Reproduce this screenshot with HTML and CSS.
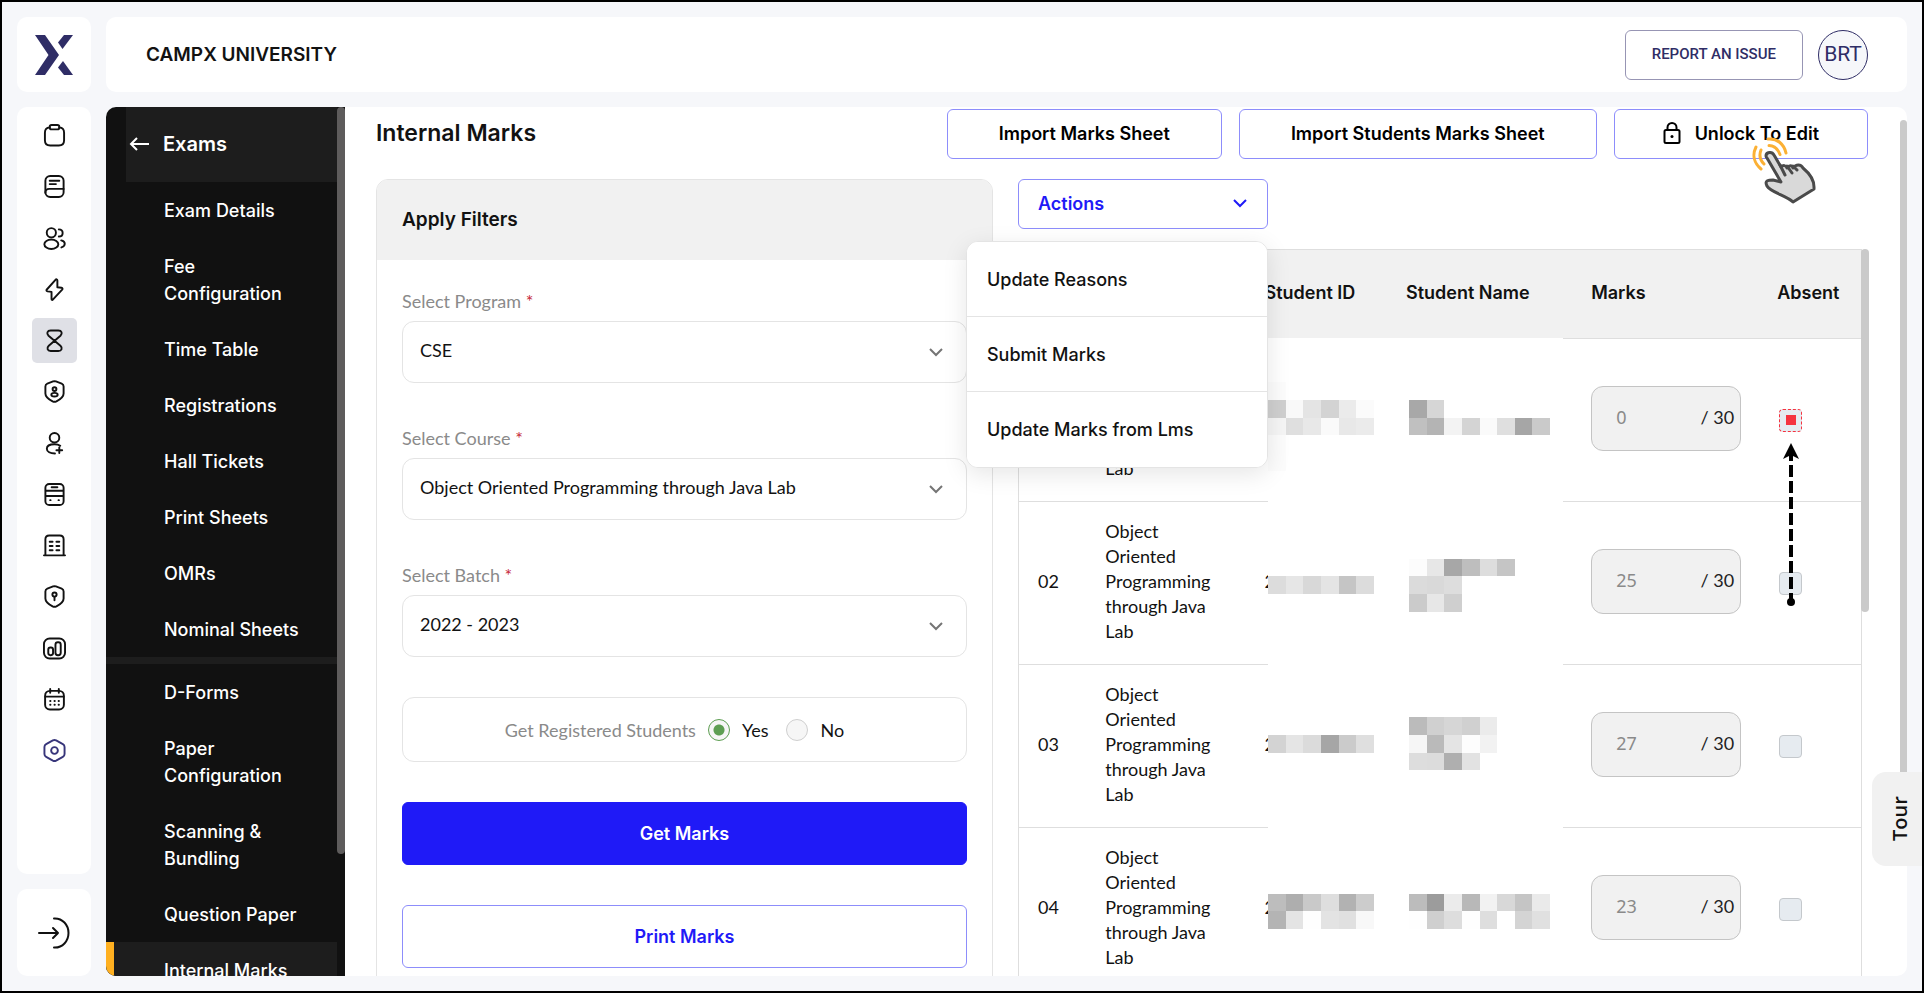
FILE: index.html
```html
<!DOCTYPE html>
<html lang="en">
<head>
    <meta charset="UTF-8">
    <meta name="viewport" content="width=device-width, initial-scale=1.0">
    <title>Internal Marks - CampX University</title>
    <link rel="stylesheet" href="styles.css">
</head>
<body>
    <div class="rail">
        <a href="#" class="rail-logo" aria-label="CampX">
            <svg width="38" height="40" viewBox="0 0 38 40" fill="#2f2d66">
                <path d="M0 0h10l14 20L10 40H0l13.500-20z"/>
                <path d="M29 0h9l-10.500 14-4.500-6.500z"/>
                <path d="M28 26l10 14h-9l-6-7.500z"/>
            </svg>
        </a>
        <nav class="rail-nav" aria-label="Modules">
            <a href="#" class="rail-link" aria-label="Tasks">
                <svg class="icon" viewBox="0 0 24 24"><path d="M7 3.500C4 3.800 2 5.500 2 9v8c0 4 1.500 5.500 5.500 5.500h9c4 0 5.500-1.500 5.500-5.500V9c0-3.500-2-5.200-5-5.500"/><rect x="7" y="1" width="10" height="4.600" rx="2"/></svg>
            </a>
            <a href="#" class="rail-link" aria-label="Courses">
                <svg class="icon" viewBox="0 0 24 24"><rect x="2.500" y="1" width="19" height="22" rx="5"/><path d="M2.500 18.500c0-2.500 1.500-4 4-4h15M7 6h10M7 9.500h6.500"/></svg>
            </a>
            <a href="#" class="rail-link" aria-label="People">
                <svg class="icon" viewBox="0 0 24 24"><circle cx="8.700" cy="6" r="4.800"/><ellipse cx="8.700" cy="18" rx="7.300" ry="4.900"/><path d="M16.500 2.500c2.500 0 4 1.600 4 3.700s-1.500 3.700-4 3.700M19 14c2 .4 3.700 1.700 3.700 3.600s-1.400 3.200-3.500 3.700"/></svg>
            </a>
            <a href="#" class="rail-link" aria-label="Activity">
                <svg class="icon" viewBox="0 0 24 24"><path d="M13 1.900 4 12c-.8.900-.4 1.800.7 2l4.200.5v7.300c0 1.200.8 1.500 1.600.6L20 12.200c.8-.9.400-1.800-.7-2l-4.300-.5V2.500c0-1.100-1.200-1.500-2-.6z"/></svg>
            </a>
            <a href="#" class="rail-link rail-link-active" aria-label="Exams">
                <svg class="icon" viewBox="0 0 24 24"><path d="M8 1.500h8c3.600 0 4.600 3.200 2.200 5.500L6 17.500c-2.400 2.300-1.400 5.500 2 5.500h8c3.600 0 4.600-3.200 2.200-5.500L5.800 7C3.400 4.700 4.400 1.500 8 1.500z"/></svg>
            </a>
            <a href="#" class="rail-link" aria-label="Admissions">
                <svg class="icon" viewBox="0 0 24 24"><path d="M10.500 1.500 4.500 3.700c-1.300.5-2 1.500-2 3V14c0 4 3.500 6.200 7.500 8.300 1.500.7 2.500.7 4 0 4-2.100 7.500-4.300 7.500-8.300V6.700c0-1.500-.7-2.500-2-3l-6-2.200c-1.200-.4-1.900-.4-3 0z"/><circle cx="12" cy="9.500" r="2"/><ellipse cx="12" cy="15.300" rx="3.300" ry="1.900"/></svg>
            </a>
            <a href="#" class="rail-link" aria-label="Add user">
                <svg class="icon" viewBox="0 0 24 24"><circle cx="12" cy="6" r="5"/><path d="M12.500 22.500C7.500 22.500 4 20.500 4 17.500S7.500 12.800 12 12.800c2.500 0 4.500.5 6 1.500M17 16v6M14 19h6"/></svg>
            </a>
            <a href="#" class="rail-link" aria-label="Transport">
                <svg class="icon" viewBox="0 0 24 24"><rect x="2.500" y="1" width="19" height="22" rx="4"/><path d="M9 4.500h6M3 8h18M3 13.500h18M7.500 17.900h.4M16.200 17.900h.4"/></svg>
            </a>
            <a href="#" class="rail-link" aria-label="Hostel">
                <svg class="icon" viewBox="0 0 24 24"><path d="M2.500 22V5.500c0-2.500 1.500-4 4-4h11c2.500 0 4 1.500 4 4V22M1 22.300h22M7 8h3M7 12.500h3M7 17h3M14 8h3M14 12.500h3M14 17h3"/></svg>
            </a>
            <a href="#" class="rail-link" aria-label="Security">
                <svg class="icon" viewBox="0 0 24 24"><path d="M10.500 1.500 4.500 3.700c-1.300.5-2 1.500-2 3V14c0 4 3.500 6.200 7.500 8.300 1.500.7 2.500.7 4 0 4-2.100 7.500-4.300 7.500-8.300V6.700c0-1.500-.7-2.500-2-3l-6-2.200c-1.200-.4-1.900-.4-3 0z"/><circle cx="12" cy="10" r="2.200"/><path d="M12 12.500V16"/></svg>
            </a>
            <a href="#" class="rail-link" aria-label="Reports">
                <svg class="icon" viewBox="0 0 24 24"><rect x="1" y="1.500" width="22" height="21" rx="6"/><rect x="5.500" y="11" width="5" height="8" rx="2.200"/><rect x="13" y="5.500" width="5.500" height="13.500" rx="2.500"/></svg>
            </a>
            <a href="#" class="rail-link" aria-label="Calendar">
                <svg class="icon" viewBox="0 0 24 24"><rect x="2.200" y="3" width="19.600" height="19.500" rx="5"/><path d="M2.500 9h19M7.500 1v4M16.500 1v4M7.500 13.500h.3M12 13.500h.3M16.300 13.500h.3M7.500 17.500h.3M12 17.500h.3M16.300 17.500h.3"/></svg>
            </a>
            <a href="#" class="rail-link rail-link-settings" aria-label="Settings">
                <svg class="icon" viewBox="0 0 24 24"><path d="M10.300 1.500 3.300 5.300C2 6 1.500 7 1.500 8.300v7.400c0 1.300.5 2.300 1.800 3l7 3.800c1.200.6 2.200.6 3.400 0l7-3.800c1.300-.7 1.800-1.700 1.800-3V8.300c0-1.300-.5-2.300-1.800-3l-7-3.800c-1.200-.6-2.200-.6-3.400 0z"/><circle cx="12" cy="12" r="3.500"/></svg>
            </a>
        </nav>
        <a href="#" class="rail-logout" aria-label="Log out">
            <svg width="32" height="32" viewBox="0 0 32 32" fill="none" stroke="#111" stroke-width="2" stroke-linecap="round" stroke-linejoin="round"><path d="M1 16h19M15 11l5 5-5 5M16 1.500c8.500-.5 14.500 6.500 14.500 14.500S24.500 31 16 30.500"/></svg>
        </a>
    </div>

    <div class="page">
        <header class="topbar">
            <div class="org-name">CAMPX UNIVERSITY</div>
            <button type="button" class="report-button">REPORT AN ISSUE</button>
            <div class="avatar">BRT</div>
        </header>

        <div class="main">
            <aside class="sidebar">
                <a href="#" class="sidebar-title">
                    <svg width="20" height="14" viewBox="0 0 20 14" fill="none" stroke="#fff" stroke-width="2"><path d="M20 7H2M8 1 2 7l6 6"/></svg>
                    Exams
                </a>
                <nav class="sidebar-nav">
                    <a href="#">Exam Details</a>
                    <a href="#">Fee Configuration</a>
                    <a href="#">Time Table</a>
                    <a href="#">Registrations</a>
                    <a href="#">Hall Tickets</a>
                    <a href="#">Print Sheets</a>
                    <a href="#">OMRs</a>
                    <a href="#">Nominal Sheets</a>
                    <hr>
                    <a href="#">D-Forms</a>
                    <a href="#">Paper Configuration</a>
                    <a href="#">Scanning &amp; Bundling</a>
                    <a href="#">Question Paper</a>
                    <a href="#" class="active">Internal Marks</a>
                </nav>
                <div class="thumb sidebar-thumb"></div>
            </aside>

            <main class="content">
                <div class="title-row">
                    <h1>Internal Marks</h1>
                    <button type="button" class="outline-button">Import Marks Sheet</button>
                    <button type="button" class="outline-button">Import Students Marks Sheet</button>
                    <button type="button" class="outline-button unlock-button">
                        <svg width="18" height="24" viewBox="0 0 18 24" fill="none" stroke="#000" stroke-width="2"><rect x="1.500" y="9" width="15" height="13" rx="1.500"/><path d="M4.500 9V6.500a4.500 4.500 0 0 1 9 0V9"/><circle cx="9" cy="15.500" r="1.500" fill="#000" stroke="none"/></svg>
                        Unlock To Edit
                        <!-- tapping hand -->
                        <svg class="tap-hand" width="66" height="68" viewBox="0 0 66 68" fill="none" stroke-linecap="round" stroke-linejoin="round">
                            <path d="M16 2c9-1 16 5 18 14M17 8.500c5 0 9 4 11 9M4 10C0 18 2 26 9 32M9 13c-2 5-1 10 3 14" stroke="#fbb034" stroke-width="3"/>
                            <path d="M14 19c0-4 6-5 8-1l7 12c2-2 5-2 6 1 2-3 5-3 6 0 3-4 8-4 10 0 6 5 11 12 11 19v2L41 65C35 59 18 55 15 49c-3-6 2-6 6-6l8 2-14-24c-1-1-1-1-1-2z" fill="#d9d9d9" stroke="#4a4a4a" stroke-width="3"/>
                            <path d="M28 28l5 10M35 29l5 7M41 29l4 4" stroke="#4a4a4a" stroke-width="3"/>
                        </svg>
                    </button>
                </div>

                <div class="columns">
                    <form class="filters">
                        <h2>Apply Filters</h2>
                        <div class="filters-body">
                            <div class="field">
                                <label for="program">Select Program <span>*</span></label>
                                <div class="select-box">
                                    <select id="program"><option>CSE</option></select>
                                    <svg class="chevron" viewBox="0 0 14 9"><path d="M1 1l6 6 6-6"/></svg>
                                </div>
                            </div>
                            <div class="field">
                                <label for="course">Select Course <span>*</span></label>
                                <div class="select-box">
                                    <select id="course"><option>Object Oriented Programming through Java Lab</option></select>
                                    <svg class="chevron" viewBox="0 0 14 9"><path d="M1 1l6 6 6-6"/></svg>
                                </div>
                            </div>
                            <div class="field">
                                <label for="batch">Select Batch <span>*</span></label>
                                <div class="select-box">
                                    <select id="batch"><option>2022 - 2023</option></select>
                                    <svg class="chevron" viewBox="0 0 14 9"><path d="M1 1l6 6 6-6"/></svg>
                                </div>
                            </div>
                            <div class="radio-box" role="radiogroup" aria-labelledby="registeredLabel">
                                <span id="registeredLabel">Get Registered Students</span>
                                <label><input type="radio" name="registered" checked>Yes</label>
                                <label><input type="radio" name="registered">No</label>
                            </div>
                            <button type="button" class="get-button">Get Marks</button>
                            <button type="button" class="print-button">Print Marks</button>
                        </div>
                    </form>

                    <section class="marks">
                        <div class="actions">
                            <button type="button" class="actions-button">
                                Actions
                                <svg class="chevron" viewBox="0 0 14 9"><path d="M1 1l6 6 6-6"/></svg>
                            </button>
                            <div class="actions-menu">
                                <button type="button">Update Reasons</button>
                                <button type="button">Submit Marks</button>
                                <button type="button">Update Marks from Lms</button>
                            </div>
                        </div>

                        <div class="table-wrap">
                            <table>
                                <colgroup>
                                    <col class="col-no"><col class="col-subject"><col class="col-id"><col class="col-name"><col class="col-marks"><col class="col-absent">
                                </colgroup>
                                <thead>
                                    <tr>
                                        <th></th>
                                        <th></th>
                                        <th>Student ID</th>
                                        <th>Student Name</th>
                                        <th>Marks</th>
                                        <th>Absent</th>
                                    </tr>
                                </thead>
                                <tbody>
                                    <tr>
                                        <td></td>
                                        <td>Object Oriented Programming through Java Lab</td>
                                        <td></td>
                                        <td></td>
                                        <td><div class="mark"><input type="text" value="0" aria-label="Marks 01" disabled><span>/ 30</span></div></td>
                                        <td class="absent-cell">
                                            <input type="checkbox" aria-label="Absent 01" checked>
                                            <svg class="guide-arrow" width="16" height="164" viewBox="0 0 16 164"><path d="M8 10v148" stroke="#000" stroke-width="4" stroke-dasharray="12 4" stroke-dashoffset="4"/><path d="M8 0l8 16-8-4-8 4z"/><circle cx="8" cy="159" r="4"/></svg>
                                        </td>
                                    </tr>
                                    <tr>
                                        <td>02</td>
                                        <td>Object Oriented Programming through Java Lab</td>
                                        <td>2</td>
                                        <td></td>
                                        <td><div class="mark"><input type="text" value="25" aria-label="Marks 02" disabled><span>/ 30</span></div></td>
                                        <td><input type="checkbox" aria-label="Absent 02"></td>
                                    </tr>
                                    <tr>
                                        <td>03</td>
                                        <td>Object Oriented Programming through Java Lab</td>
                                        <td>2</td>
                                        <td></td>
                                        <td><div class="mark"><input type="text" value="27" aria-label="Marks 03" disabled><span>/ 30</span></div></td>
                                        <td><input type="checkbox" aria-label="Absent 03"></td>
                                    </tr>
                                    <tr>
                                        <td>04</td>
                                        <td>Object Oriented Programming through Java Lab</td>
                                        <td>2</td>
                                        <td></td>
                                        <td><div class="mark"><input type="text" value="23" aria-label="Marks 04" disabled><span>/ 30</span></div></td>
                                        <td><input type="checkbox" aria-label="Absent 04"></td>
                                    </tr>
                                </tbody>
                            </table>
                            <svg class="redaction" id="redaction"></svg>
                            <div class="thumb table-thumb"></div>
                        </div>
                    </section>
                </div>
                <div class="thumb content-thumb"></div>
            </main>
        </div>
    </div>

    <button type="button" class="tour-button">Tour</button>

    <script>
        // Grey blocks over the student id and name: [row, first column, shades]
        const blocks = [
            [-1, 0, 'fc'],
            [0, 0, 'cf f9 e4 d3 eb fb'],
            [0, 8, 'a8 d6'],
            [1, 0, 'f5 df e8 fa e8 eb'],
            [1, 8, 'c0 b4 f3 d4 fa df a6 ca'],
            [2, 0, 'fc'],
            [3, 0, 'fc'],
            [9, 8, 'fc e7 a7 be dd c5'],
            [10, 0, 'dc e6 d8 e4 c5 dc'],
            [10, 8, 'db d9 dd'],
            [11, 8, 'cb e7 cf'],
            [18, 8, 'bb d0 d6 d0 eb'],
            [19, 0, 'd3 e5 db a6 cb df'],
            [19, 8, 'f6 ba e4 fd f2'],
            [20, 8, 'dd dc af e2'],
            [28, 0, 'bd ae c9 de b2 cc'],
            [28, 8, 'bc 9c eb b8 f2 d8 c5 ea'],
            [29, 0, 'b4 e4 fe e3 e0 f8'],
            [29, 8, 'fe cf dd fe de ff d4 e0']
        ];
        let rects = '';
        blocks.forEach(([row, col, shades]) => {
            shades.split(' ').forEach((shade, i) => {
                rects += `<rect x="${col + i}" y="${row}" width="1" height="1" fill="#${shade.repeat(3)}"/>`;
            });
        });
        document.getElementById('redaction').innerHTML =
            `<g transform="translate(0 62) scale(17.63)" shape-rendering="crispEdges">${rects}</g>`;
    </script>
</body>
</html>
```
FILE: styles.css
```css
* {
    box-sizing: border-box;
}
body {
    margin: 0;
    height: 100vh;
    padding: 15px;
    display: flex;
    gap: 15px;
    border: 2px solid #000;
    background: #f6f7fa;
    color: #121212;
    font-family: Lato, sans-serif;
    font-size: 18px;
    overflow: hidden;
    position: relative;
}
a {
    color: inherit;
    text-decoration: none;
}
button {
    font-family: Inter, sans-serif;
    cursor: pointer;
}
.thumb {
    position: absolute;
    width: 8px;
    border-radius: 4px;
    background: #cacaca;
}

/* icon rail */
.rail {
    width: 74px;
    flex-shrink: 0;
    display: flex;
    flex-direction: column;
    gap: 15px;
}
.rail-logo, .rail-nav, .rail-logout {
    background: #fff;
    border-radius: 10px;
    display: flex;
    align-items: center;
    justify-content: center;
}
.rail-logo {
    height: 75px;
}
.rail-nav {
    flex: 1;
    flex-direction: column;
    justify-content: space-between;
    padding: 6px 0 101px;
}
.rail-logout {
    height: 87px;
}
.rail-link {
    width: 45px;
    height: 45px;
    border-radius: 5px;
    display: flex;
    align-items: center;
    justify-content: center;
}
.rail-link-active {
    background: #dfe0e6;
}
.rail-link-settings {
    color: #37357a;
}
.icon {
    width: 23px;
    height: 23px;
    fill: none;
    stroke: currentColor;
    stroke-width: 2;
    stroke-linecap: round;
    stroke-linejoin: round;
    overflow: visible;
}

.page {
    flex: 1;
    min-width: 0;
    display: flex;
    flex-direction: column;
    gap: 15px;
}
.topbar {
    height: 75px;
    flex-shrink: 0;
    padding: 0 39px 0 40px;
    display: flex;
    align-items: center;
    gap: 15px;
    background: #fff;
    border-radius: 10px;
}
.org-name {
    flex: 1;
    font-family: Inter, sans-serif;
    font-size: 19px;
    font-weight: 600;
}
.report-button {
    height: 50px;
    padding: 0 26px 2px;
    border: 1px solid #9795b4;
    border-radius: 6px;
    background: #fff;
    color: #2f2d66;
    font-family: Roboto, sans-serif;
    font-size: 15px;
    font-weight: 500;
}
.avatar {
    width: 50px;
    height: 50px;
    padding-bottom: 2px;
    display: flex;
    align-items: center;
    justify-content: center;
    border: 1px solid #2f2d66;
    border-radius: 50%;
    background: #f6f7fa;
    color: #2f2d66;
    font-family: Roboto, sans-serif;
    font-size: 21px;
}
.main {
    flex: 1;
    min-height: 0;
    display: flex;
    background: #fff;
    border-radius: 10px;
    overflow: hidden;
}

/* dark sidebar */
.sidebar {
    width: 239px;
    flex-shrink: 0;
    padding-right: 8px;
    background: #111;
    color: #fff;
    font-family: Inter, sans-serif;
    font-weight: 500;
    position: relative;
    overflow: hidden;
}
.sidebar-title {
    height: 75px;
    margin-left: 20px;
    padding: 0 0 2px 3px;
    display: flex;
    align-items: center;
    gap: 14px;
    background: #1d1d1d;
    font-size: 20px;
    font-weight: 600;
}
.sidebar-nav a {
    display: block;
    padding: 15px 30px 14px 58px;
    font-size: 18px;
    line-height: 27px;
}
.sidebar-nav .active {
    padding-left: 50px;
    border-left: 8px solid #ffb020;
    background: #1d1d1d;
}
.sidebar-nav hr {
    height: 7px;
    margin: 0;
    border: none;
    background: #1d1d1d;
}
.sidebar-thumb {
    top: 0;
    right: 0;
    height: 86%;
    background: #5e5c5c;
}

.content {
    flex: 1;
    min-width: 0;
    padding: 2px 37px 0 31px;
    position: relative;
}
.content-thumb {
    top: 13px;
    right: 0;
    width: 7px;
    height: 700px;
}
.title-row {
    display: flex;
    align-items: center;
    gap: 17px;
    margin: 0 2px 20px 0;
}
.title-row h1 {
    flex: 1;
    margin: 0;
    padding-bottom: 2px;
    font-family: Inter, sans-serif;
    font-size: 23px;
    font-weight: 600;
}
.outline-button {
    height: 50px;
    padding: 0 51px 2px;
    border: 1px solid #8d8dfb;
    border-radius: 6px;
    background: #fff;
    color: #000;
    font-size: 18px;
    font-weight: 600;
}
.unlock-button {
    padding-left: 48px;
    padding-right: 48px;
    display: flex;
    align-items: center;
    gap: 14px;
    position: relative;
}
.tap-hand {
    position: absolute;
    left: 137px;
    top: 27px;
    z-index: 2;
}
.columns {
    display: grid;
    grid-template-columns: 42fr 58fr;
    gap: 25px;
}

/* filters */
.filters {
    min-width: 0;
    border: 1px solid #e4e4e4;
    border-radius: 12px;
    overflow: hidden;
}
.filters h2 {
    margin: 0;
    padding: 0 25px;
    font-family: Inter, sans-serif;
    font-size: 19px;
    font-weight: 600;
    line-height: 80px;
    background: #f1f1f1;
}
.filters-body {
    padding: 26px 25px;
    display: flex;
    flex-direction: column;
    gap: 40px;
}
.field label {
    display: block;
    margin-bottom: 5px;
    line-height: 30px;
    color: #8a8a8a;
}
.field label span {
    color: #c62839;
}
.select-box {
    position: relative;
}
.select-box select {
    appearance: none;
    width: 100%;
    height: 62px;
    padding: 0 50px 4px 17px;
    border: 1px solid #e4e4e4;
    border-radius: 12px;
    background: #fff;
    color: #121212;
    font-family: Lato, sans-serif;
    font-size: 18px;
}
.chevron {
    width: 14px;
    height: 9px;
    fill: none;
    stroke: #757575;
    stroke-width: 2;
}
.select-box .chevron {
    position: absolute;
    right: 24px;
    top: 27px;
}
.radio-box {
    height: 65px;
    display: flex;
    align-items: center;
    justify-content: center;
    gap: 12px;
    padding-right: 14px;
    border: 1px solid #e4e4e4;
    border-radius: 12px;
    color: #8a8a8a;
}
.radio-box label {
    display: flex;
    align-items: center;
    gap: 12px;
    margin-right: 6px;
    color: #121212;
}
.radio-box input {
    appearance: none;
    width: 22px;
    height: 22px;
    margin: 0;
    border: 1px solid #cfcfcf;
    border-radius: 50%;
    background: #f6f6f6;
}
.radio-box input:checked {
    border-color: #5d9e52;
    background: radial-gradient(circle, #5d9e52 5px, #f6f6f6 6px);
}
.get-button, .print-button {
    height: 63px;
    border: 1px solid #1f1af7;
    border-radius: 6px;
    background: #1f1af7;
    color: #fff;
    font-size: 18px;
    font-weight: 600;
}
.print-button {
    border-color: #8d8dfb;
    background: #fff;
    color: #1f1af7;
}

/* marks table */
.marks {
    min-width: 0;
}
.actions {
    width: 250px;
    margin-bottom: 20px;
    position: relative;
}
.actions-button {
    width: 100%;
    height: 50px;
    padding: 0 20px 2px 19px;
    display: flex;
    align-items: center;
    justify-content: space-between;
    border: 1px solid #8d8dfb;
    border-radius: 6px;
    background: #fff;
    color: #1f1af7;
    font-size: 18px;
    font-weight: 600;
}
.actions-button .chevron {
    stroke: #1f1af7;
    stroke-width: 2;
}
.actions-menu {
    position: absolute;
    top: 62px;
    right: 0;
    z-index: 3;
    width: 302px;
    display: flex;
    flex-direction: column;
    background: #fff;
    border: 1px solid #e4e4e4;
    border-radius: 12px;
    box-shadow: 0 6px 24px rgba(0, 0, 0, 0.1);
    overflow: hidden;
}
.actions-menu button {
    height: 75px;
    padding: 0 20px;
    border: none;
    border-bottom: 1px solid #e4e4e4;
    background: #fff;
    color: #121212;
    font-size: 18px;
    font-weight: 500;
    text-align: left;
}
.actions-menu button:last-child {
    border-bottom: none;
}
.table-wrap {
    margin-right: 8px;
    border: 1px solid #dedede;
    position: relative;
}
table {
    width: 100%;
    table-layout: fixed;
    border-collapse: collapse;
}
.col-no {
    width: 8%;
}
.col-subject {
    width: 18.9%;
}
.col-id {
    width: 16.8%;
}
.col-name {
    width: 22%;
}
.col-marks {
    width: 22.1%;
}
.col-absent {
    width: 12.2%;
}
th, td {
    padding: 0 19px;
    border-bottom: 1px solid #dedede;
    text-align: left;
}
th {
    height: 88px;
    padding-bottom: 2px;
    background: #f1f1f1;
    font-family: Inter, sans-serif;
    font-size: 18px;
    font-weight: 600;
    white-space: nowrap;
}
td {
    height: 163px;
    padding-bottom: 2px;
    line-height: 25px;
}
.mark {
    width: 150px;
    height: 65px;
    padding: 0 6px 3px 24px;
    display: flex;
    align-items: center;
    border: 1px solid #c4c4c4;
    border-radius: 12px;
    background: #f1f1f1;
    color: #222;
}
.mark input {
    flex: 1;
    min-width: 0;
    padding: 0;
    border: none;
    background: none;
    color: #8a8a8a;
    font-family: "Noto Sans", sans-serif;
    font-size: 18px;
}
td input[type="checkbox"] {
    appearance: none;
    display: block;
    width: 23px;
    height: 23px;
    margin: 3px 0 0 2px;
    border: 1px solid #c4c8cc;
    border-radius: 4px;
    background: #e6ebf0;
}
td input[type="checkbox"]:checked {
    border: 1px dashed #f5333f;
    background: linear-gradient(#f5333f, #f5333f) center / 10px 10px no-repeat #e6ebf0;
}
.absent-cell {
    position: relative;
}
.guide-arrow {
    position: absolute;
    left: 25px;
    top: 104px;
    z-index: 2;
}
.redaction {
    position: absolute;
    left: 249px;
    top: 88px;
    width: 295px;
    height: calc(100% - 88px);
    background: #fff;
}
.table-thumb {
    left: 100%;
    top: -1px;
    height: 363px;
}

.tour-button {
    position: absolute;
    right: 0;
    top: 770px;
    width: 50px;
    height: 94px;
    padding: 0 4px 0 0;
    border: none;
    border-radius: 0 14px 14px 0;
    background: #f1f1f1;
    color: #121212;
    font-family: "Open Sans", sans-serif;
    font-size: 20px;
    font-weight: 600;
    writing-mode: vertical-rl;
    transform: rotate(180deg);
}
```
